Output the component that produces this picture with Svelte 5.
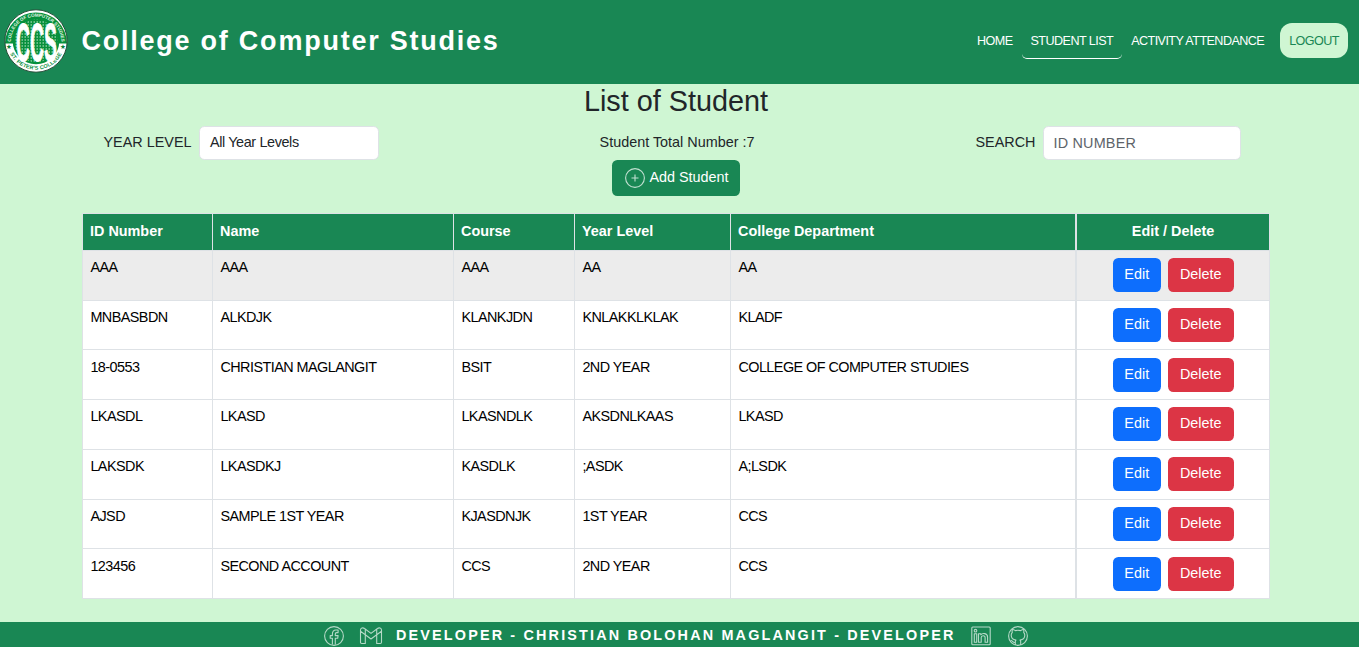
<script>
  const students = [
    ['AAA', 'AAA', 'AAA', 'AA', 'AA'],
    ['MNBASBDN', 'ALKDJK', 'KLANKJDN', 'KNLAKKLKLAK', 'KLADF'],
    ['18-0553', 'CHRISTIAN MAGLANGIT', 'BSIT', '2ND YEAR', 'COLLEGE OF COMPUTER STUDIES'],
    ['LKASDL', 'LKASD', 'LKASNDLK', 'AKSDNLKAAS', 'LKASD'],
    ['LAKSDK', 'LKASDKJ', 'KASDLK', ';ASDK', 'A;LSDK'],
    ['AJSD', 'SAMPLE 1ST YEAR', 'KJASDNJK', '1ST YEAR', 'CCS'],
    ['123456', 'SECOND ACCOUNT', 'CCS', '2ND YEAR', 'CCS']
  ];
  const columns = ['ID Number', 'Name', 'Course', 'Year Level', 'College Department'];
</script>

<div class="page">
  <header>
    <svg class="logo" viewBox="0 0 64 64" width="64" height="64">
      <defs>
        <path id="arc-top" d="M7.2 38 A25.3 25.3 0 1 1 56.8 38" />
        <path id="arc-bottom" d="M4 39 A28.9 28.9 0 0 0 60 39" />
        <pattern id="digits" width="3" height="3" patternUnits="userSpaceOnUse">
          <path d="M.5 0V2M2 1H3" stroke="#a7dcb9" stroke-width=".6" />
        </pattern>
      </defs>
      <circle cx="32" cy="32" r="31.3" fill="#fff" />
      <path d="M1 34.5A31 31 0 1 1 63 34.5Z" fill="#07903c" />
      <circle cx="32" cy="32" r="23.3" fill="#07903c" />
      <circle cx="32" cy="32" r="21.5" fill="url(#digits)" />
      <circle cx="32" cy="32" r="31.2" fill="none" stroke="#173d29" stroke-width=".9" />
      <text class="ring" fill="#e4f7e9"><textPath href="#arc-top" startOffset="50%" text-anchor="middle">COLLEGE OF COMPUTER STUDIES</textPath></text>
      <text class="ring low" fill="#07903c"><textPath href="#arc-bottom" startOffset="50%" text-anchor="middle">ST. PETER'S COLLEGE</textPath></text>
      <text class="star" x="2" y="39.7">★</text>
      <text class="star" x="56" y="39.7">★</text>
      <g transform="translate(12 52.3) scale(1 2.55)">
        <text class="mono" x="0" y="0" textLength="41" lengthAdjust="spacingAndGlyphs">CCS</text>
      </g>
    </svg>
    <h1>College of Computer Studies</h1>
    <nav>
      <a href="#home">HOME</a>
      <a href="#students" class="active">STUDENT LIST</a>
      <a href="#activity">ACTIVITY ATTENDANCE</a>
      <a href="#logout" class="logout">LOGOUT</a>
    </nav>
  </header>

  <main>
    <h2>List of Student</h2>
    <div class="filters">
      <div class="filter left">
        <span>YEAR LEVEL</span>
        <div class="field select">All Year Levels</div>
      </div>
      <div class="total">Student Total Number :7</div>
      <div class="filter right">
        <span>SEARCH</span>
        <input class="field" placeholder="ID NUMBER" />
      </div>
    </div>
    <button class="btn add">
      <svg viewBox="0 0 22 22" width="22" height="22" fill="none" stroke="#c2e0d1" stroke-width="1.1">
        <circle cx="11" cy="11" r="9.4" /><path d="M11 7.5v7M7.5 11h7" />
      </svg>
      <span>Add Student</span>
    </button>

    <div class="table">
      {#each columns as c}<div class="th">{c}</div>{/each}
      <div class="th actions-head">Edit / Delete</div>
      {#each students as row, i}
        {#each row as cell}<div class="td" class:shade={i === 0} class:low={i % 4 === 2}>{cell}</div>{/each}
        <div class="td actions" class:shade={i === 0} class:low={i % 4 === 2}>
          <button class="btn edit">Edit</button>
          <button class="btn delete">Delete</button>
        </div>
      {/each}
    </div>
  </main>

  <footer>
    <svg viewBox="0 0 22 22" width="22" height="22">
      <circle cx="11" cy="11" r="9.4" />
      <path d="M9.4 19.6v-6.3H7.2v-2.7h2.2V8.9c0-2.5 1.2-3.9 3.5-3.9h2.2v2.6h-1.4c-1.1 0-1.4.5-1.4 1.4v1.6h2.8l-.4 2.7h-2.4v6.3" />
    </svg>
    <svg class="mail" viewBox="0 0 24 22" width="24" height="22">
      <path d="M1.5 5c0-2 2.4-2.8 4-1.5L12 8.4l6.5-4.9c1.6-1.3 4-.5 4 1.5v12.3c0 .8-.6 1.2-1.2 1.2h-3.6V9.8L12 14 6.3 9.8v8.7H2.7c-.7 0-1.2-.5-1.2-1.2ZM1.5 6.3l4.8 3.5V4M22.5 6.3l-4.8 3.5V4" />
    </svg>
    <strong>DEVELOPER - CHRISTIAN BOLOHAN MAGLANGIT - DEVELOPER</strong>
    <svg class="linkedin" viewBox="0 0 22 22" width="22" height="22">
      <rect x="1.8" y="2" width="18.4" height="17.7" rx="1" />
      <path d="M4.3 8.7h2.4v8.5H4.3ZM8.5 8.7h2.3v1.1c1.6-2.1 6.8-1.9 6.8 2.4v5h-2.5v-4.6c0-2.6-3.9-2.5-3.9 0v4.6H8.5Z" /><circle cx="5.5" cy="5.7" r="1.3" />
    </svg>
    <svg class="github" viewBox="0 0 22 22" width="22" height="22">
      <circle cx="11" cy="11" r="9.4" />
      <path d="M8.3 20v-3.2c0-.8.3-1.3.7-1.7-3-.4-4.8-1.9-4.8-4.8 0-1.2.4-2.1 1.1-2.9-.3-1-.2-2 .1-2.9 1.2 0 2.1.5 3 1.1 1.7-.4 3.5-.4 5.2 0 .9-.6 1.8-1.1 3-1.1.3.9.4 1.9.1 2.9.7.8 1.1 1.7 1.1 2.9 0 2.9-1.8 4.4-4.8 4.8.4.4.7.9.7 1.7V20M8.3 17.4c-2.5.6-2.6-1.9-4.4-2.2" />
    </svg>
  </footer>
</div>

<style>
  :global(body) { margin: 0; overflow: hidden; }
  .page {
    box-sizing: border-box; width: 1359px; height: 647px; overflow: hidden;
    display: flex; flex-direction: column;
    background: #cff6d3; color: #212529;
    font: 14.4px/21.6px 'Liberation Sans', Arial, sans-serif;
  }
  header { height: 84px; flex: none; box-sizing: border-box; display: flex; align-items: center; background: #198754; padding: 0 11px 2px 3.5px; }
  .logo { display: block; margin-right: 14px; flex: none; overflow: visible; }
  .ring { font: bold 4.6px 'Liberation Sans', Arial, sans-serif; }
  .ring.low { font-size: 5.4px; letter-spacing: .2px; }
  .star { font: 6.5px 'DejaVu Sans', sans-serif; fill: #07803c; }
  .mono { font: bold 21px 'Liberation Sans', Arial, sans-serif; fill: #fff; stroke: #fff; stroke-width: .3; }
  h1 { margin: 0 0 1px; color: #fff; font-size: 27px; line-height: 36px; letter-spacing: 1.76px; white-space: nowrap; }
  nav { margin-left: auto; display: flex; align-items: flex-start; }
  nav a { box-sizing: border-box; height: 36px; padding: 8px 9px 6px; color: #fff; font-size: 12.6px; line-height: 21px; letter-spacing: -.56px; text-decoration: none; white-space: nowrap; border-bottom: 1px solid transparent; }
  nav { margin-bottom: 1px; }
  nav .active { border-bottom-color: #fff; border-radius: 5px; }
  nav .logout { margin-left: 7px; height: 35px; color: #198754; background: #cff6d3; border: 0; border-radius: 12px; }

  main { flex: 1; display: flex; flex-direction: column; align-items: center; padding-right: 7px; }
  h2 { margin: 0; font-size: 28.8px; font-weight: 400; line-height: 35px; }
  .filters { width: 1137px; display: grid; grid-template-columns: 1fr auto 1fr; margin: 7px 0 0 -8px; height: 34px; }
  .filter { display: flex; gap: 8px; line-height: 32px; }
  .left { gap: 7.5px; }
  .right { justify-content: flex-end; gap: 7px; }
  .total { line-height: 32px; padding-left: 10px; }
  .field { box-sizing: border-box; height: 34px; border: 1px solid #dee2e6; border-radius: 5.4px; background: #fff; padding: 0 10px; color: #212529; outline: 0; }
  .select { width: 180px; letter-spacing: -.38px; line-height: 31px; }
  input.field { width: 198px; font: 14.4px 'Liberation Sans', Arial, sans-serif; letter-spacing: .2px; }
  input.field::placeholder { color: #5d6369; opacity: 1; }
  .btn { border: 0; border-radius: 5.4px; color: #fff; font: 14.4px/20px 'Liberation Sans', Arial, sans-serif; padding: 0; }
  .add { width: 128px; height: 36px; background: #198754; display: flex; align-items: center; justify-content: center; gap: 3px; }
  .add span { margin: 0 -1px 2px 0; }

  .table {
    width: 1187px; box-sizing: border-box; margin: 17px 1px 0 0;
    display: grid; grid-template-columns: 130px 241px 121px 156px 346px 193px;
    grid-template-rows: 37px 50px 49px 50px 50px 50px 49px 50px;
    border: 1px solid #dee2e6; border-right: 0; border-bottom: 0;
  }
  .th, .td { box-sizing: border-box; border-right: 1px solid #dee2e6; border-bottom: 1px solid #dee2e6; padding: 6px 7.4px; }
  .th { background: #198754; color: #fff; font-weight: 700; padding: 7px 7px 0; }
  .td { background: #fff; color: #000; letter-spacing: -.54px; }
  .td.low { padding-top: 7px; }
  .td.shade { background: #ececec; }
  .th:nth-child(6n + 5), .td:nth-child(6n + 5) { border-right-width: 2px; }
  .th.actions-head { text-align: center; }
  .td.actions { display: flex; justify-content: center; gap: 7px; padding: 7px 0 0; }
  .td.actions.low { padding-top: 8px; }
  .actions .btn { height: 34px; padding: 0 0 2px .5px; }
  .edit { width: 48px; background: #0d6efd; }
  .delete { width: 66px; background: #dc3545; }

  footer { height: 25px; flex: none; display: flex; align-items: flex-start; background: #198754; padding-left: 323px; color: #fff; box-sizing: border-box; }
  footer svg { margin-top: 3px; flex: none; fill: none; stroke: #b5d9c7; stroke-width: 1.1; stroke-linejoin: round; }
  footer .mail { margin-left: 14px; }
  footer strong { margin-left: 13px; line-height: 26px; letter-spacing: 2.16px; white-space: nowrap; }
  footer .linkedin { margin-left: 14.5px; }
  footer .github { margin-left: 15px; }
</style>
